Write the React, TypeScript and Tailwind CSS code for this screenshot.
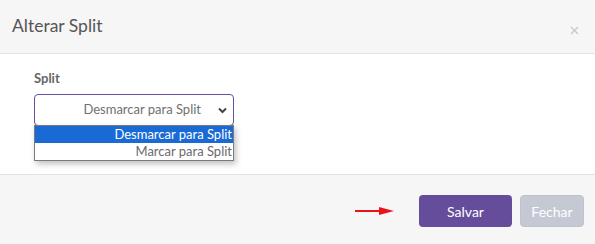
import React from "react";

export default function App() {
  return (
    <div className="w-[595px] h-[244px] bg-white overflow-hidden font-['Lato','Liberation_Sans',sans-serif]">
      {/* Header */}
      <div className="h-[54px] bg-[#f6f6f6] border-b border-[#e3e3e3] flex items-center justify-between pl-[12px] pr-[16px]">
        <h4 className="text-[17.5px] text-[#555] leading-none pb-[1px]">Alterar Split</h4>
        <svg width="9" height="9" viewBox="0 0 9 9" className="mt-[8px]">
          <path d="M1 1L8 8M8 1L1 8" stroke="#c8c8c8" strokeWidth="1.4" />
        </svg>
      </div>

      {/* Body */}
      <div className="h-[120px] px-[34px] pt-[18px]">
        <label className="block text-[13px] font-bold text-[#666] leading-none">Split</label>
        <div className="relative mt-[9px] w-[200px]">
          <div className="h-[32px] border border-[#6a4fa0] rounded-[4px] flex items-center justify-end pr-[5px] text-[13px] text-[#707070]">
            <span>Desmarcar para Split</span>
            <svg width="9" height="7" viewBox="0 0 9 7" className="ml-[17px] mr-[1px]">
              <path d="M1 1.5L4.5 5L8 1.5" stroke="#444" strokeWidth="2" fill="none" />
            </svg>
          </div>
          <div className="absolute left-0 top-[31px] w-[200px] bg-white border border-[#7a7a7a] shadow-[2px_3px_6px_rgba(0,0,0,0.25)] text-[13px] leading-[17px] text-right">
            <div className="bg-[#1a6ad6] text-white pr-[1px]">Desmarcar para Split</div>
            <div className="text-[#6a6a6a] pr-[1px]">Marcar para Split</div>
          </div>
        </div>
      </div>

      {/* Footer */}
      <div className="h-[70px] bg-[#f6f6f6] border-t border-[#e3e3e3] flex items-start justify-end pt-[20px] pr-[11px] gap-[8px]">
        <svg width="40" height="10" viewBox="0 0 40 10" className="mt-[11px] mr-[16px]">
          <line x1="0" y1="5" x2="28" y2="5" stroke="#e8141b" strokeWidth="2" />
          <polygon points="24,1 39,5 24,9" fill="#e8141b" />
        </svg>
        <button className="w-[93px] h-[32px] rounded-[4px] bg-[#654d9c] text-white text-[14px]">Salvar</button>
        <button className="w-[64px] h-[32px] rounded-[4px] bg-[#c5c9d3] border border-[#bfc3cd] text-white text-[14px]">Fechar</button>
      </div>
    </div>
  );
}
